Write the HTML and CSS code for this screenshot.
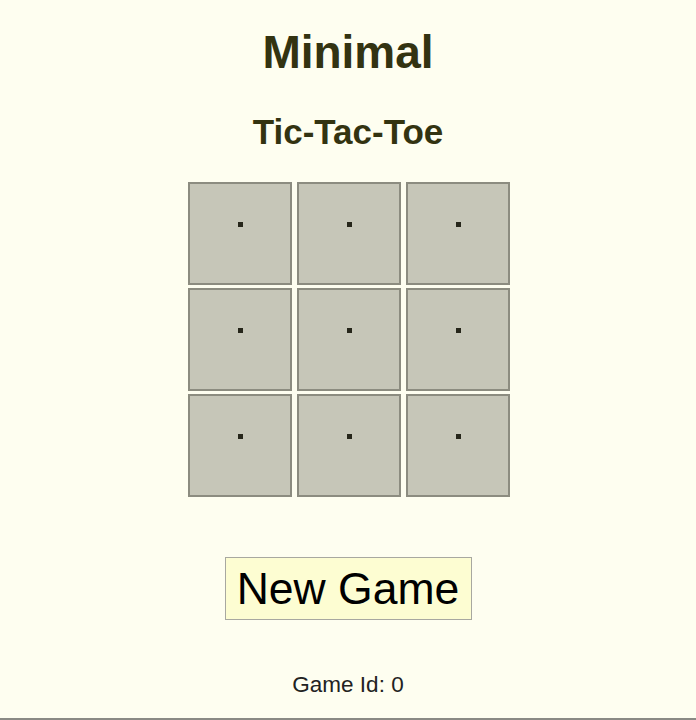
FILE: index.html
```html
<!DOCTYPE html>
<html>
<head>
<meta charset="utf-8">
<title>Minimal Tic-Tac-Toe</title>
<link rel="stylesheet" href="styles.css">
</head>
<body>
<main class="page">
  <h1 class="title">Minimal</h1>
  <h2 class="subtitle">Tic-Tac-Toe</h2>
  <div class="board">
    <div class="cell"><span class="dot"></span></div>
    <div class="cell"><span class="dot"></span></div>
    <div class="cell"><span class="dot"></span></div>
    <div class="cell"><span class="dot"></span></div>
    <div class="cell"><span class="dot"></span></div>
    <div class="cell"><span class="dot"></span></div>
    <div class="cell"><span class="dot"></span></div>
    <div class="cell"><span class="dot"></span></div>
    <div class="cell"><span class="dot"></span></div>
  </div>
  <button class="new-game">New Game</button>
  <p class="game-id">Game Id: 0</p>
</main>
</body>
</html>
```
FILE: styles.css
```css
html, body {
  margin: 0;
  padding: 0;
  height: 100%;
}
body {
  background: #fefef0;
  font-family: "Liberation Sans", Arial, sans-serif;
  box-sizing: border-box;
  border-bottom: 2px solid #8a8a84;
}
.page {
  display: flex;
  flex-direction: column;
  align-items: center;
  padding-top: 29px;
}
.title {
  margin: 0;
  font-size: 46px;
  line-height: 46px;
  font-weight: bold;
  color: #333311;
}
.subtitle {
  margin: 39px 0 0;
  font-size: 35px;
  line-height: 35px;
  font-weight: bold;
  color: #333311;
}
.board {
  margin-top: 33px;
  display: grid;
  grid-template-columns: repeat(3, 104px);
  grid-auto-rows: 103px;
  column-gap: 5px;
  row-gap: 3px;
  margin-left: 2px;
}
.cell {
  box-sizing: border-box;
  background: #c6c6b8;
  border: 2px solid #8c8c80;
  display: flex;
  justify-content: center;
  align-items: flex-start;
  padding-top: 38px;
}
.dot {
  width: 5px;
  height: 5px;
  background: #26261a;
}
.new-game {
  margin-top: 60px;
  box-sizing: border-box;
  width: 247px;
  height: 63px;
  padding: 0;
  background: #fdfdd2;
  border: 1px solid #a8a8a0;
  border-radius: 0;
  font-family: "Liberation Sans", Arial, sans-serif;
  font-size: 44.5px;
  line-height: 61px;
  color: #000;
}
.game-id {
  margin: 54px 0 0;
  font-size: 22.5px;
  line-height: 22px;
  color: #222;
}
```
